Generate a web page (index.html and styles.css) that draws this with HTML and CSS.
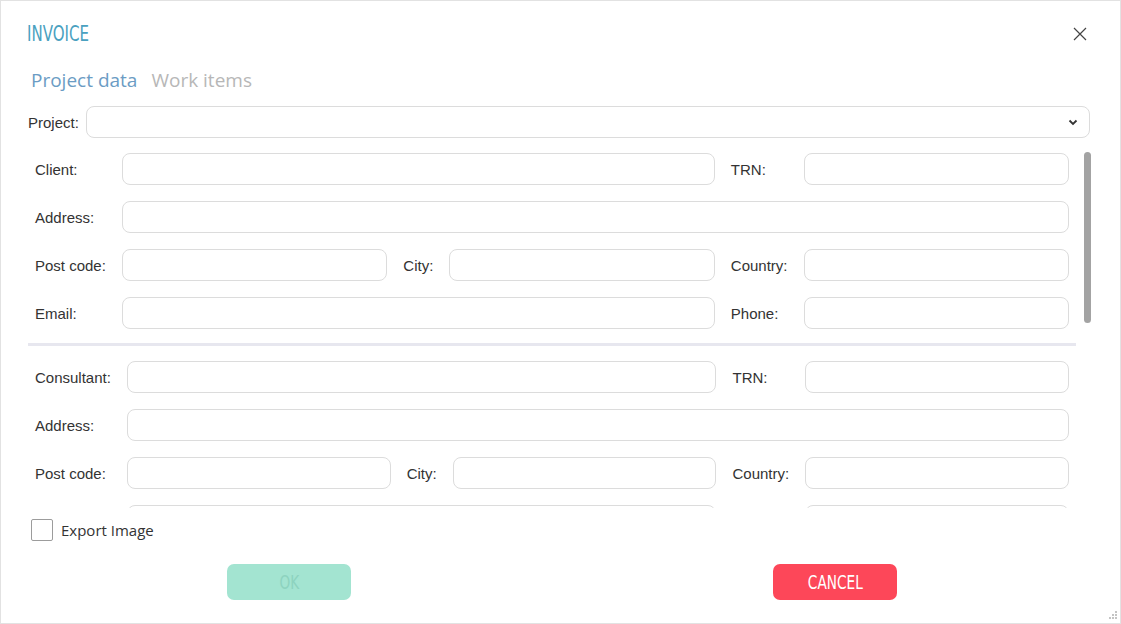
FILE: index.html
```html
<!DOCTYPE html>
<html>
<head>
    <title>Invoice</title>
    <link rel="stylesheet" href="styles.css">
</head>
<body>
    <div class="dialog">
        <header class="dialog-head">
            <h1 class="title"><span>INVOICE</span></h1>
            <button class="close" type="button" aria-label="Close">
                <svg width="14" height="14" viewBox="0 0 14 14"><path d="M1 1L13 13M13 1L1 13" stroke="#444" stroke-width="1.2" fill="none"/></svg>
            </button>
        </header>

        <nav class="tabs">
            <span class="tab active">Project data</span>
            <span class="tab">Work items</span>
        </nav>

        <div class="project-row">
            <label class="label">Project:</label>
            <div class="select">
                <svg width="10" height="7" viewBox="0 0 10 7"><path d="M1.5 1.5L5 5L8.5 1.5" stroke="#333" stroke-width="1.8" fill="none"/></svg>
            </div>
        </div>

        <div class="scroll-wrap">
            <div class="scroll">
                <!-- client -->
                <div class="fields">
                    <label class="label">Client:</label>
                    <input class="field wide3" type="text">
                    <label class="label">TRN:</label>
                    <input class="field" type="text">

                    <label class="label">Address:</label>
                    <input class="field full" type="text">

                    <label class="label">Post code:</label>
                    <input class="field" type="text">
                    <label class="label">City:</label>
                    <input class="field" type="text">
                    <label class="label">Country:</label>
                    <input class="field" type="text">

                    <label class="label">Email:</label>
                    <input class="field wide3" type="text">
                    <label class="label">Phone:</label>
                    <input class="field" type="text">
                </div>

                <hr class="divider">

                <!-- consultant -->
                <div class="fields">
                    <label class="label">Consultant:</label>
                    <input class="field wide3" type="text">
                    <label class="label">TRN:</label>
                    <input class="field" type="text">

                    <label class="label">Address:</label>
                    <input class="field full" type="text">

                    <label class="label">Post code:</label>
                    <input class="field" type="text">
                    <label class="label">City:</label>
                    <input class="field" type="text">
                    <label class="label">Country:</label>
                    <input class="field" type="text">

                    <label class="label">Email:</label>
                    <input class="field wide3" type="text">
                    <label class="label">Phone:</label>
                    <input class="field" type="text">
                </div>
            </div>
            <div class="thumb"></div>
        </div>

        <label class="check">
            <span class="box"></span>
            <span>Export Image</span>
        </label>

        <footer class="actions">
            <div class="slot"><button class="btn ok" type="button" disabled><span>OK</span></button></div>
            <div class="slot"><button class="btn cancel" type="button"><span>CANCEL</span></button></div>
        </footer>

        <svg class="grip" width="9" height="9" viewBox="0 0 9 9">
            <rect x="6" y="0" width="2" height="2" fill="#c4c4c4"/>
            <rect x="3" y="3" width="2" height="2" fill="#c4c4c4"/>
            <rect x="6" y="3" width="2" height="2" fill="#c4c4c4"/>
            <rect x="0" y="6" width="2" height="2" fill="#c4c4c4"/>
            <rect x="3" y="6" width="2" height="2" fill="#c4c4c4"/>
            <rect x="6" y="6" width="2" height="2" fill="#c4c4c4"/>
        </svg>
    </div>
</body>
</html>
```

FILE: styles.css
```css
* {
    box-sizing: border-box;
}

body {
    margin: 0;
    font-family: "Liberation Sans", Arial, sans-serif;
    color: #333;
    background-color: #fff;
}

.dialog {
    position: relative;
    width: 1121px;
    height: 624px;
    border: 1px solid #e2e2e2;
    background-color: #fff;
    overflow: hidden;
}

/* header */
.dialog-head {
    display: flex;
    align-items: center;
    justify-content: space-between;
    height: 45px;
    padding: 21px 33px 0 26px;
}

.title {
    margin: 0;
    font-family: "Liberation Sans Narrow", "DejaVu Sans Condensed", sans-serif;
    font-size: 22px;
    font-weight: normal;
    line-height: 24px;
    color: #4aa1c0;
}

.title span {
    display: inline-block;
    transform: scaleX(0.76);
    transform-origin: left center;
}

.close {
    display: flex;
    padding: 0;
    border: none;
    background: none;
    cursor: pointer;
}

/* tabs */
.tabs {
    display: flex;
    gap: 14px;
    margin-top: 21px;
    padding-left: 30px;
    font-family: "Open Sans", sans-serif;
    font-size: 19px;
    line-height: 26px;
}

.tab {
    color: #b7b7b7;
}

.tab.active {
    color: #6b9cc4;
}

/* project select */
.project-row {
    display: flex;
    align-items: center;
    gap: 7px;
    margin: 13px 30px 0 27px;
}

.label {
    font-size: 15px;
    color: #333;
    white-space: nowrap;
}

.select {
    flex: 1;
    display: flex;
    align-items: center;
    justify-content: flex-end;
    height: 32px;
    padding-right: 11px;
    border: 1px solid #dcdcdc;
    border-radius: 8px;
}

/* scrolling form */
.scroll-wrap {
    position: relative;
    margin: 14px 27px 0 26px;
}

.scroll {
    height: 356px;
    padding: 1px 24px 0 8px;
    overflow-y: auto;
    scrollbar-width: none;
}

.scroll::-webkit-scrollbar {
    display: none;
}

.thumb {
    position: absolute;
    top: 0;
    right: 2px;
    width: 7px;
    height: 171px;
    border-radius: 4px;
    background-color: #a3a3a3;
}

.fields {
    display: grid;
    grid-template-columns: auto 1fr auto 1fr auto 1fr;
    grid-auto-rows: 32px;
    column-gap: 16px;
    row-gap: 16px;
    align-items: center;
}

.field {
    height: 32px;
    width: 100%;
    margin: 0;
    padding: 0 10px;
    border: 1px solid #dcdcdc;
    border-radius: 8px;
    font: inherit;
    background-color: #fff;
}

.field.wide3 {
    grid-column: span 3;
}

.field.full {
    grid-column: 2 / -1;
}

.divider {
    height: 3px;
    margin: 14px -7px 15px -7px;
    border: none;
    background-color: #e7e7ef;
}

/* export checkbox */
.check {
    display: flex;
    align-items: center;
    gap: 8px;
    margin: 11px 0 0 30px;
    font-family: "Open Sans", sans-serif;
    font-size: 15px;
    color: #333;
}

.box {
    width: 22px;
    height: 22px;
    border: 1px solid #9c9c9c;
    border-radius: 2px;
}

/* buttons */
.actions {
    display: grid;
    grid-template-columns: 1fr 1fr;
    margin-top: 23px;
    padding: 0 12px 0 15px;
}

.slot {
    display: flex;
    justify-content: center;
}

.btn {
    width: 124px;
    height: 36px;
    border: none;
    border-radius: 7px;
    font-family: "Liberation Sans Narrow", "DejaVu Sans Condensed", sans-serif;
    font-size: 19px;
    cursor: pointer;
}

.btn span {
    display: inline-block;
    transform: scaleX(0.8);
}

.btn.ok {
    background-color: #a3e4d1;
    color: #8dd3bf;
}

.btn.cancel {
    background-color: #fd4759;
    color: #fff;
}

.grip {
    position: absolute;
    right: 2px;
    bottom: 3px;
}
```
